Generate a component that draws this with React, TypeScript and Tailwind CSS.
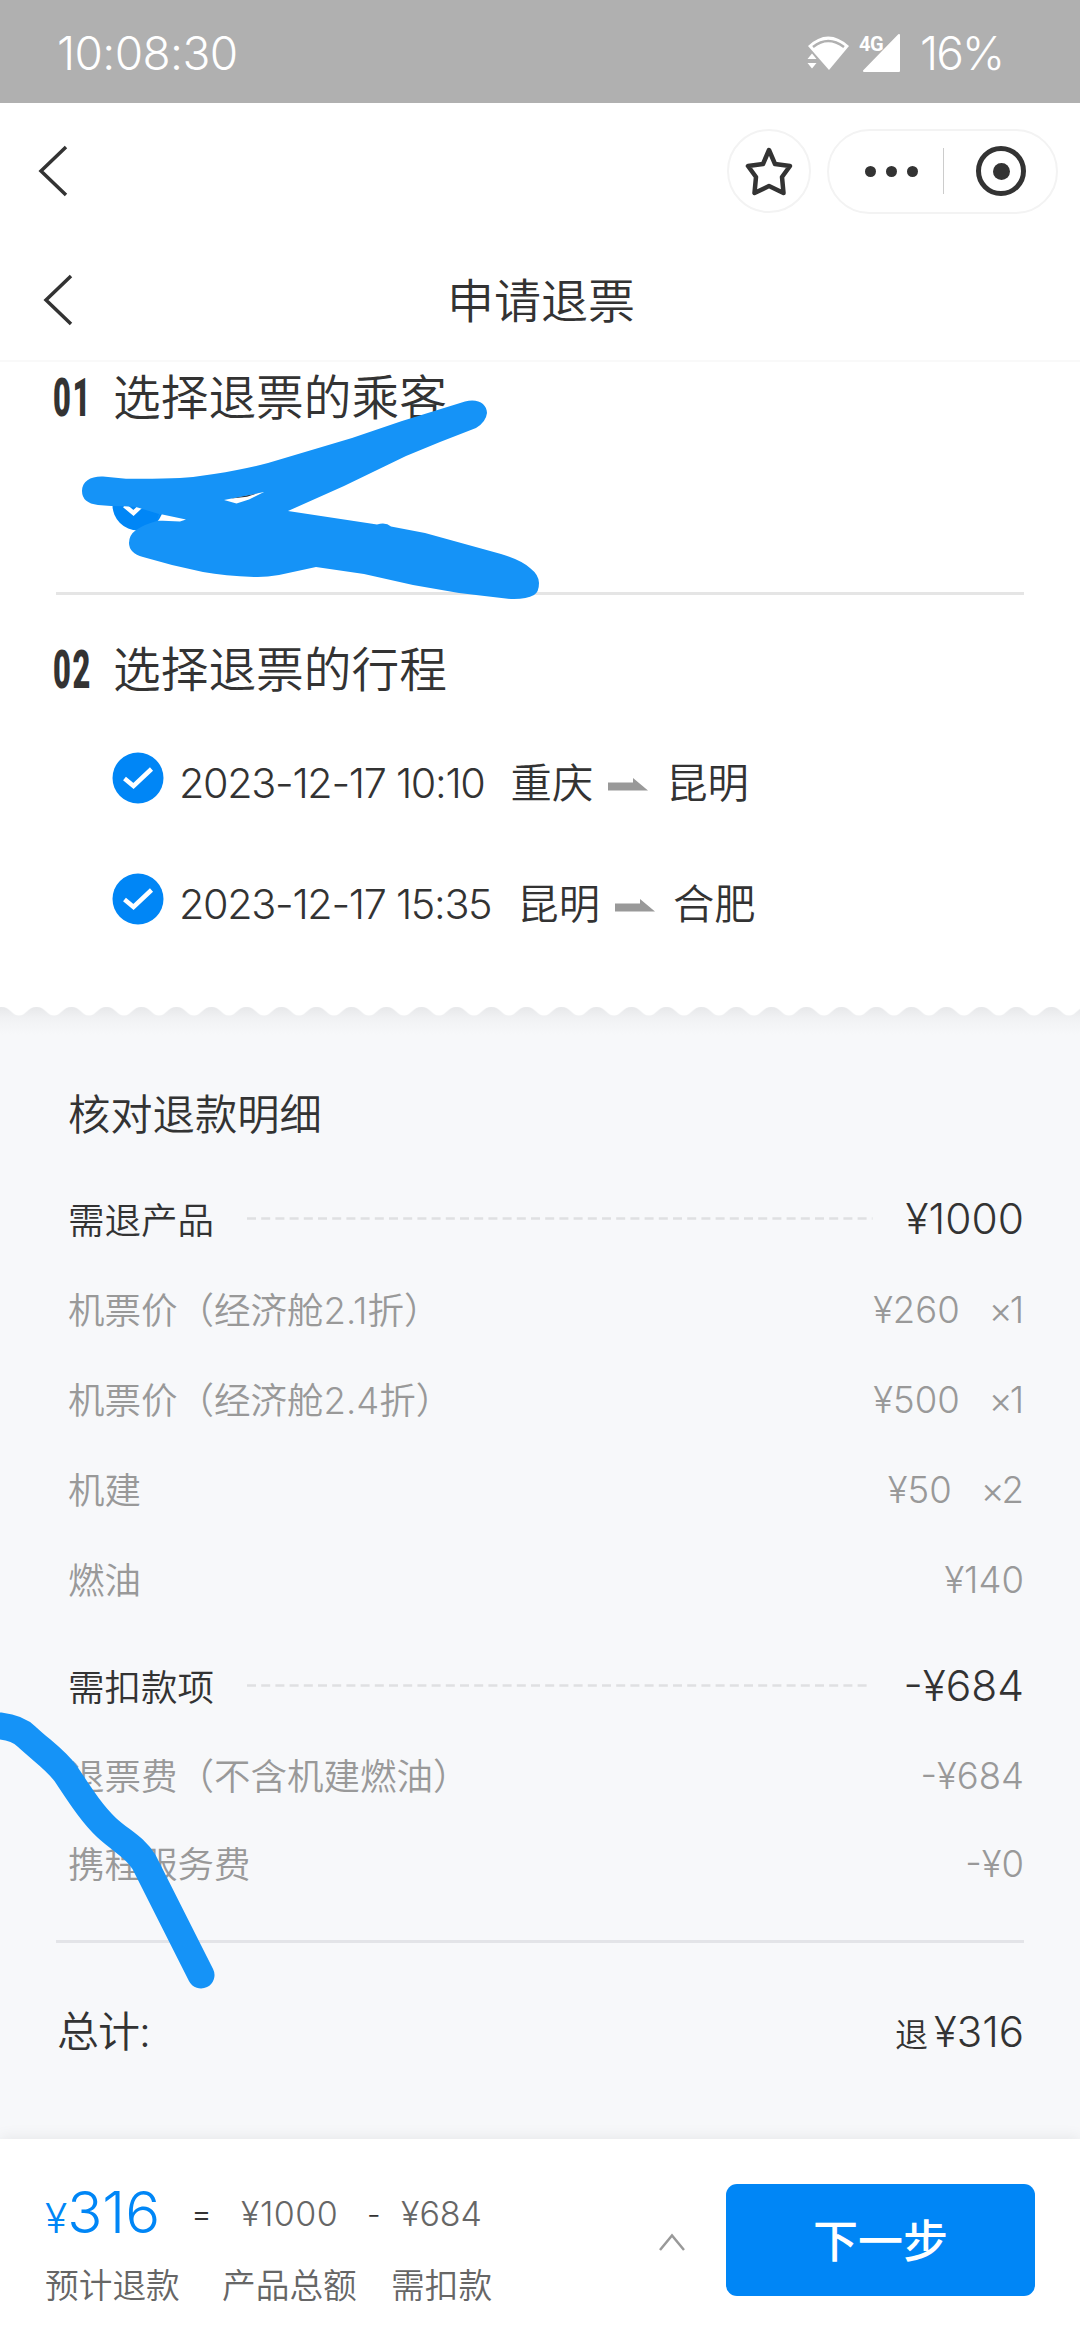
interface Trip {
  time: string;
  from: string;
  to: string;
}

interface FeeItem {
  label: string;
  amount: string;
  count?: string;
}

const trips: Trip[] = [
  { time: '2023-12-17 10:10', from: '重庆', to: '昆明' },
  { time: '2023-12-17 15:35', from: '昆明', to: '合肥' },
];

const productItems: FeeItem[] = [
  { label: '机票价（经济舱2.1折）', amount: '¥260', count: '×1' },
  { label: '机票价（经济舱2.4折）', amount: '¥500', count: '×1' },
  { label: '机建', amount: '¥50', count: '×2' },
  { label: '燃油', amount: '¥140' },
];

const deductItems: FeeItem[] = [
  { label: '退票费（不含机建燃油）', amount: '-¥684' },
  { label: '携程服务费', amount: '-¥0' },
];

function StatusBar() {
  return (
    <div className="flex h-[103px] items-center justify-between bg-[#b0b0b0] pl-[57px] pr-[77px] pt-[3px] text-white">
      <span className="text-[46px] leading-none tracking-[-0.6px]">10:08:30</span>
      <div className="flex items-center">
        <svg width="44" height="40" viewBox="0 0 44 40" className="mr-[9px]">
          <path d="M1 13 Q21 -6 42 13 L22 37 Z" fill="#fff" />
          <path d="M6 14 Q21 2 37 14" fill="none" stroke="#b0b0b0" strokeWidth="2.5" />
          <path d="M0 18.500 H5 L10.500 25 V38 H0 Z" fill="#b0b0b0" />
          <path d="M0.500 26 L5 20.500 L9.500 26 Z M0.500 30 L5 35.500 L9.500 30 Z" fill="#fff" />
        </svg>
        <div className="relative mr-[18px]">
          <svg width="42" height="40" viewBox="0 0 42 40">
            <path d="M39 2 V38 H4 Z" fill="#fff" stroke="#fff" strokeWidth="2" strokeLinejoin="round" />
          </svg>
          <span className="absolute left-[-1px] top-[1px] font-['Roboto'] text-[20px] font-bold leading-none tracking-[-0.5px]">4G</span>
        </div>
        <span className="text-[46px] leading-none tracking-[-2px]">16%</span>
      </div>
    </div>
  );
}

function BackIcon() {
  return (
    <svg width="32" height="54" viewBox="0 0 32 54" fill="none" stroke="#333" strokeWidth="3.5">
      <path d="M29 3 L4 27 L29 51" />
    </svg>
  );
}

function ToolBar() {
  return (
    <div className="flex h-[136px] items-center pl-[37px] pr-[22px]">
      <BackIcon />
      <div className="ml-auto flex h-[84px] w-[84px] items-center justify-center rounded-full border-2 border-[#f3f3f3]">
        <svg width="48" height="50" viewBox="0 0 48 50" fill="none" stroke="#333" strokeWidth="4.5" strokeLinejoin="round">
          <path d="M24 4 L30 18 L45 20 L37 31 L38.500 47 L24 40 L9.500 47 L11 31 L3 20 L18 18 Z" />
        </svg>
      </div>
      <div className="ml-4 flex h-[85px] w-[231px] items-center rounded-full border-2 border-[#f3f3f3] pl-[36px]">
        <div className="flex gap-[10px]">
          {[0, 1, 2].map((i) => (
            <span key={i} className="h-[11px] w-[11px] rounded-full bg-[#333]" />
          ))}
        </div>
        <span className="ml-[25px] h-[46px] w-px bg-[#ccc]" />
        <span className="ml-[32px] flex h-[50px] w-[50px] items-center justify-center rounded-full border-[5px] border-[#333]">
          <span className="h-[17px] w-[17px] rounded-full bg-[#333]" />
        </span>
      </div>
    </div>
  );
}

function NavBar() {
  return (
    <div className="grid h-[123px] grid-cols-3 items-center border-b-2 border-[#f9f9f9] pl-[42px] pr-[40px]">
      <BackIcon />
      <h1 className="pt-[2px] text-center text-[47px] leading-none text-[#333]">申请退票</h1>
    </div>
  );
}

function CheckIcon() {
  return (
    <svg width="52" height="52" viewBox="0 0 52 52">
      <circle cx="26" cy="26" r="25.500" fill="#0086f6" />
      <path d="M12.500 26.500 L21.500 34 L39.500 17" fill="none" stroke="#fff" strokeWidth="4.500" />
    </svg>
  );
}

function StepTitle({ no, title }: { no: string; title: string }) {
  return (
    <div className="flex h-[60px] items-center text-[#333]">
      <span className="w-[60px]">
        <span className="inline-block origin-left scale-x-[0.57] font-['Roboto'] text-[54px] font-black leading-[60px] tracking-[3px]">{no}</span>
      </span>
      <h2 className="text-[47.7px] leading-[60px]">{title}</h2>
    </div>
  );
}

function TripRow({ trip }: { trip: Trip }) {
  return (
    <div className="flex h-[121px] items-center text-[41.3px] leading-none text-[#333]">
      <div className="pb-[12px]">
        <CheckIcon />
      </div>
      <span className="ml-[15px] tracking-[-1.3px]">{trip.time}</span>
      <span className="ml-[26px]">{trip.from}</span>
      <svg width="40" height="13" viewBox="0 0 40 13" className="ml-[15px] mr-[18px] mt-[1px]">
        <path d="M0 4.500 H25 V0 L40 12.500 H0 Z" fill="#999" />
      </svg>
      <span>{trip.to}</span>
    </div>
  );
}

// White paper edge with its shadow falling on the grey area
function TornEdge() {
  return (
    <svg width="1080" height="36" viewBox="0 0 1080 36" className="block">
      <defs>
        <linearGradient id="edgeShade" x1="0" y1="0" x2="0" y2="1">
          <stop offset="0" stopColor="#e6e7e9" />
          <stop offset="0.35" stopColor="#f1f2f4" />
          <stop offset="0.8" stopColor="#f7f8fa" />
        </linearGradient>
        <pattern id="edgeWave" width="35" height="12" patternUnits="userSpaceOnUse" x="1.500">
          <path d="M0 0 H35 V1 C26 1 25 9.500 17.500 9.500 C10 9.500 9 1 0 1 Z" fill="#fff" />
        </pattern>
      </defs>
      <rect width="1080" height="36" fill="url(#edgeShade)" />
      <rect width="1080" height="12" fill="url(#edgeWave)" />
    </svg>
  );
}

function GroupRow({ label, amount }: { label: string; amount: string }) {
  return (
    <div className="flex h-[90px] items-center leading-none text-[#333]">
      <span className="text-[36.5px]">{label}</span>
      <svg height="3" className="mb-[6px] ml-[33px] mr-[33px] min-w-0 flex-1">
        <line x1="0" y1="1.500" x2="100%" y2="1.500" stroke="#dfe0e2" strokeWidth="2.500" strokeDasharray="9 5.200" />
      </svg>
      <span className="pb-[4px] text-[42.5px]">{amount}</span>
    </div>
  );
}

function FeeRow({ item }: { item: FeeItem }) {
  return (
    <div className="flex flex-1 items-center justify-between text-[36.5px] leading-none text-[#999]">
      <span>{item.label}</span>
      <span className="flex gap-[29px] pb-[2px]">
        <span>{item.amount}</span>
        {item.count && <span className="pr-[3px] tracking-[-3px]">{item.count}</span>}
      </span>
    </div>
  );
}

function RefundDetail() {
  return (
    <section className="h-[1133px] bg-[#f7f8fa]">
      <TornEdge />
      <div className="pl-[68px] pr-[56px] pt-[43px]">
        <h2 className="mb-[31px] text-[42.3px] leading-[60px] text-[#333]">核对退款明细</h2>
        <GroupRow label="需退产品" amount="¥1000" />
        <div className="flex h-[360px] flex-col">
          {productItems.map((item) => (
            <FeeRow key={item.label} item={item} />
          ))}
        </div>
        <div className="mt-[17px]">
          <GroupRow label="需扣款项" amount="-¥684" />
        </div>
        <div className="flex h-[176px] flex-col">
          {deductItems.map((item) => (
            <FeeRow key={item.label} item={item} />
          ))}
        </div>
      </div>
      <div className="mx-[56px] mt-[31px] h-[3px] bg-[#e3e4e8]" />
      <div className="flex h-[178px] items-center justify-between pl-[57px] pr-[56px] leading-none text-[#333]">
        <span className="text-[42px] tracking-[-1px]">总计:</span>
        <span className="flex items-baseline gap-[6px]">
          <span className="text-[33px]">退</span>
          <span className="text-[42px]">¥316</span>
        </span>
      </div>
    </section>
  );
}

function Footer() {
  return (
    <footer className="relative flex h-[201px] bg-white pl-[45px] pr-[45px] pt-[40px] shadow-[0_-2px_14px_rgba(0,0,0,0.07)]">
      <div className="w-[614px] text-[#666]">
        <div className="flex h-[66px] items-baseline leading-[66px]">
          <span className="w-[146px] text-[58px] text-[#0086f6]">
            <span className="text-[41px]">¥</span>316
          </span>
          <span className="flex -translate-y-[8px]">
            <span className="w-[50px] text-[32px] text-[#333]">=</span>
            <span className="w-[126px] text-[34px] tracking-[0.5px]">¥1000</span>
            <span className="w-[34px] text-[30px] text-[#333]">-</span>
            <span className="text-[34px]">¥684</span>
          </span>
        </div>
        <div className="mt-[15px] flex text-[33.7px] leading-[52px]">
          <span className="w-[177px]">预计退款</span>
          <span className="w-[169px]">产品总额</span>
          <span>需扣款</span>
        </div>
      </div>
      <svg width="26" height="18" viewBox="0 0 26 18" className="mt-[54px]" fill="none" stroke="#999" strokeWidth="2.500">
        <path d="M1 17 L13 2.500 L25 17" />
      </svg>
      <button className="ml-auto mt-[5px] h-[112px] w-[309px] rounded-[11px] bg-[#0086f6] pt-[3px] text-[45px] font-medium text-white">下一步</button>
    </footer>
  );
}

// Hand-drawn marker strokes on top of the page
function Scribbles() {
  return (
    <svg width="1080" height="2340" viewBox="0 0 1080 2340" className="pointer-events-none absolute left-0 top-0">
      <path d="M222 500.500 L247 494 L266 490 L249 500.500 L236.500 505 Z" fill="#fff" />
      <path d="M231 498.500 L235 497.500 L258 493 L247 496.800 L236 498 Z" fill="#333" />
      <path
        fillRule="evenodd"
        fill="#1593f7"
        d="M82 491 C82 481 91 476 103 476.500 L126 478.700 Q160 479 180 478 Q196 477 214 474 Q245 469 268 463 L352 438 L402 421 L465 401.500 C478 398 487 404 487 413 Q486 422 476 428 L440 442 L406 456 L344 486 L288 511 L377 524.500 Q386 522 391 526.500 L425 533 L501 554 Q521 560 530 568 Q539 575 539 583 Q539 592 534 595 Q526 599.500 511 599 L459 593 L413 585 L364 574 L316 567 L279 575 Q265 577.500 254 577 Q225 576 203 572 L172 565 L143 557 Q129 553 129 543 Q129 535 136 530 Q145 524 157 521 L159 514 L136 507 Q125 506 111 506 L98 505 Q82 503 82 491 Z M160 514 L186 519.500 L180 521.500 L157 520.500 Z M224 500 L247 495.500 L264 492 L249 499.500 L236.500 503.500 Z"
      />
      <path
        d="M-14 1725 L0 1726 Q18 1728 27 1737 C42 1751 56 1760 66 1774 C80 1795 92 1814 107 1828 C121 1841 135 1847 144 1862 L201 1975"
        fill="none"
        stroke="#1593f7"
        strokeWidth="27"
        strokeLinecap="round"
      />
    </svg>
  );
}

export default function App() {
  return (
    <div className="relative flex h-[2340px] w-[1080px] flex-col overflow-hidden bg-white font-['Inter','Noto_Sans_CJK_SC',sans-serif] font-[350]">
      <StatusBar />
      <ToolBar />
      <NavBar />

      <section className="h-[644px] pl-[53px] pr-[56px] pt-[6px]">
        <StepTitle no="01" title="选择退票的乘客" />
        <div className="ml-[59px] mt-[51px] h-[52px]">
          <CheckIcon />
        </div>
        <div className="ml-[3px] mt-[61px] h-[3px] bg-[#e5e5e5]" />
        <div className="mt-[45px]">
          <StepTitle no="02" title="选择退票的行程" />
        </div>
        <div className="ml-[59px] mt-[23px]">
          {trips.map((trip) => (
            <TripRow key={trip.time} trip={trip} />
          ))}
        </div>
      </section>

      <RefundDetail />
      <Footer />
      <Scribbles />
    </div>
  );
}
